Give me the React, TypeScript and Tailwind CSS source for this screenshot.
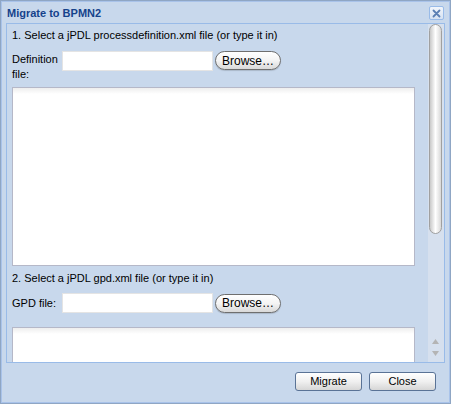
function BrowseButton() {
  return (
    <button className="ml-[2px] h-[19px] w-[66px] rounded-full border border-[#6f6f6f] bg-gradient-to-b from-white via-[#f4f4f4] to-[#d9d9d9] text-[12px] leading-none text-black shadow-[0_1px_1px_rgba(0,0,0,0.15)]">
      Browse…
    </button>
  )
}

function FooterButton({ label }: { label: string }) {
  return (
    <button className="h-[19px] w-[67px] rounded-[3px] border border-[#5a7396] bg-gradient-to-b from-white via-[#f0f0f0] to-[#d6d6d6] text-[11px] leading-none text-black">
      {label}
    </button>
  )
}

function TextBox({ height }: { height: string }) {
  return (
    <div
      className={`${height} w-[403px] shrink-0 border border-[#b5b8c8] bg-white bg-gradient-to-b from-[#eeeeee] to-white bg-[length:100%_6px] bg-no-repeat`}
    />
  )
}

export default function App() {
  return (
    <div
      className="flex h-[404px] w-[451px] flex-col overflow-hidden border border-[#8fa6c4] bg-[#c8d8ec] text-[11px] text-black shadow-[inset_1px_1px_0_#a9c3ea,inset_-1px_-1px_0_#a9c3ea]"
      style={{ fontFamily: '"Liberation Sans", Arial, sans-serif' }}
    >
      {/* header */}
      <div className="flex h-[22px] shrink-0 items-center justify-between pl-[6px] pr-[6px]">
        <span className="pt-[2px] text-[11px] font-bold text-[#15428b]">Migrate to BPMN2</span>
        <div className="mt-[2px] flex h-[14px] w-[15px] items-center justify-center rounded-[2px] border border-[#99bbe8] bg-gradient-to-b from-[#f2f6fc] to-[#d6e2f2]">
          <svg width="9" height="9" viewBox="0 0 9 9">
            <path d="M1.5 1.5 L7.5 7.5 M7.5 1.5 L1.5 7.5" stroke="#5b7fb3" strokeWidth="1.8" strokeLinecap="round" />
          </svg>
        </div>
      </div>

      {/* body */}
      <div className="mx-[5px] flex h-[340px] shrink-0 overflow-hidden border border-[#99bbe8] bg-[#c8d8ec]">
        <div className="flex flex-1 flex-col overflow-hidden pl-[5px]">
          <div className="mt-[4px] h-[14px] leading-[14px]">1. Select a jPDL processdefinition.xml file (or type it in)</div>

          <div className="mt-[9px] flex items-start">
            <div className="w-[50px] pt-[1px] leading-[15px]">
              Definition
              <br />
              file:
            </div>
            <input className="h-[20px] w-[151px] border border-[#e4e4e4] bg-white outline-none" />
            <BrowseButton />
          </div>

          <div className="mt-[5px]">
            <TextBox height="h-[179px]" />
          </div>

          <div className="mt-[5px] h-[14px] leading-[14px]">2. Select a jPDL gpd.xml file (or type it in)</div>

          <div className="mt-[8px] flex items-center">
            <div className="w-[50px]">GPD file:</div>
            <input className="h-[20px] w-[151px] border border-[#e4e4e4] bg-white outline-none" />
            <BrowseButton />
          </div>

          <div className="mt-[14px]">
            <TextBox height="h-[60px]" />
          </div>
        </div>

        {/* scrollbar */}
        <div className="flex w-[16px] shrink-0 flex-col items-center bg-[#d6e0ee] pr-[2px]">
          <div className="h-[210px] w-[13px] rounded-[7px] border border-[#a0a0a0] bg-gradient-to-r from-[#c9c9c9] via-white to-[#d8d8d8]" />
          <div className="flex-1" />
          <svg width="9" height="20" viewBox="0 0 9 20" className="mb-[4px]">
            <path d="M4.5 1 L8 6 L1 6 Z" fill="#b4b4b4" />
            <path d="M1 13 L8 13 L4.5 18 Z" fill="#b4b4b4" />
          </svg>
        </div>
      </div>

      {/* footer */}
      <div className="flex flex-1 items-start justify-end gap-[7px] pr-[14px] pt-[9px]">
        <FooterButton label="Migrate" />
        <FooterButton label="Close" />
      </div>
    </div>
  )
}
